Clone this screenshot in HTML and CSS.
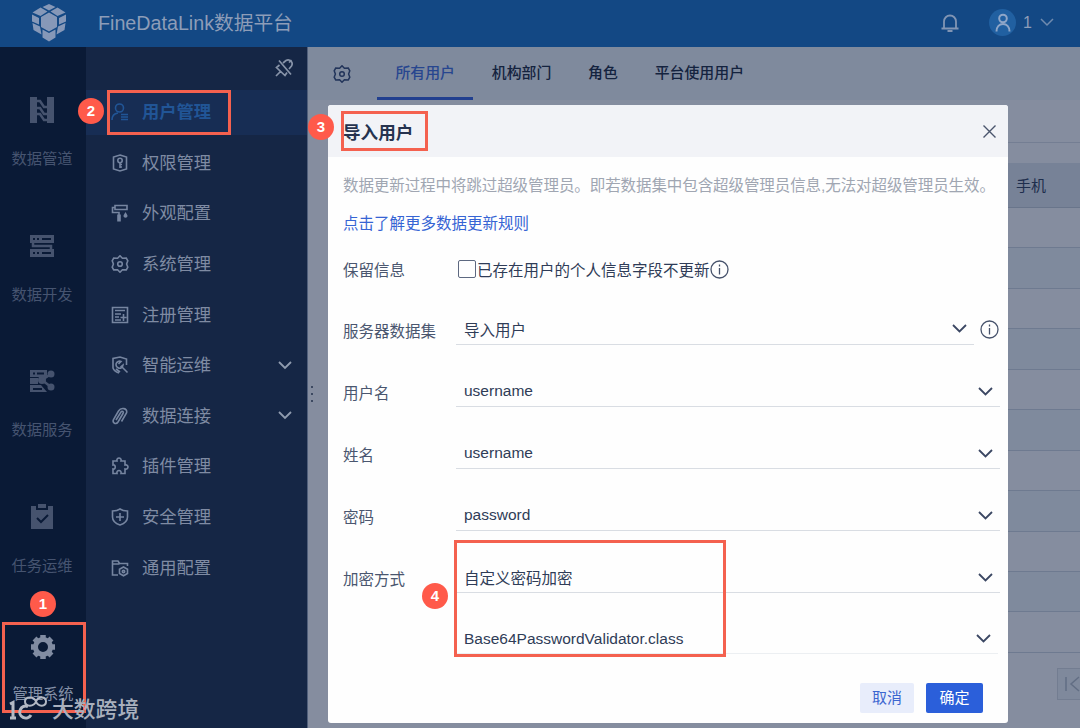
FILE: index.html
```html
<!DOCTYPE html>
<html lang="zh-CN">
<head>
	<meta charset="utf-8">
	<meta name="viewport" content="width=device-width, initial-scale=1">
	<title>FineDataLink数据平台</title>
	<link rel="stylesheet" href="styles.css">
</head>
<body>
	<div class="page">
		<div class="header">
			<svg class="logo" width="36" height="38" viewBox="0 0 36 38">
				<path d="M18 0l6.500 3-6.500 3.500-6.500-3.500z M9.500 3.500l7 4-7 4.500-8-3.500z M26.500 3.500l-7 4 7 4.500 8-3.500z M1 10.500l7 3.500v6.500l-7-3z M35 10.500l-7 3.500v6.500l7-3z M18 8.500l8 4.500v10l-8 4.500-8-4.500v-10z M1.500 19l7.500 3.500 1.500 8-8-4.500z M34.500 19l-7.500 3.500-1.500 8 8-4.500z M11.500 25.500l6.500 3.500 6.500-3.500v8l-6.500 4-6.500-4z"/>
			</svg>
			<div class="title">FineDataLink数据平台</div>
			<svg class="bell" width="20" height="20" viewBox="0 0 20 20"><path d="M4 15V8.500a6 6 0 0 1 12 0V15M1.500 15.500h17M7.500 18h5"/></svg>
			<div class="avatar">
				<svg width="20" height="22" viewBox="0 0 20 22"><circle cx="10" cy="6.500" r="3.800"/><path d="M3.500 19.500c0-5 3-7.500 6.500-7.500s6.500 2.500 6.500 7.500"/></svg>
			</div>
			<div class="user">1</div>
			<svg class="user-arrow" width="14" height="9" viewBox="0 0 14 9"><path d="M1 1l6 6 6-6"/></svg>
		</div>

		<div class="main">
			<div class="rail">
				<div class="rail-item">
					<svg width="26" height="26" viewBox="0 0 26 26"><path class="fill" d="M1 0h7v26H1zM18 0h7v26h-7z"/><path class="line" d="M8 4h3l4 6h3M8 11h3l4 6h3M8 17h3l4 6h3"/></svg>
					<span>数据管道</span>
				</div>
				<div class="rail-item">
					<svg width="26" height="26" viewBox="0 0 26 26"><path class="fill" fill-rule="evenodd" d="M1 2h24v8H1zM4 5v2h2V5zM8 5v2h2V5zM13 5v2h9V5zM1 16h24v8H1zM4 19v2h2v-2zM8 19v2h2v-2zM13 19v2h9v-2z"/><path class="line" d="M4 9v4h18v4"/></svg>
					<span>数据开发</span>
				</div>
				<div class="rail-item">
					<svg width="26" height="26" viewBox="0 0 26 26"><path class="fill" fill-rule="evenodd" d="M1 2h17v7H1zM4 4.500v2h2v-2zM8 4.500v2h7v-2zM1 10h8v6H1zM1 17h11l6 7H1zM4 20v2h9v-2z"/><circle class="fill" cx="13" cy="12" r="4"/><circle class="fill" cx="22" cy="6" r="3.500"/><circle class="fill" cx="22" cy="19" r="3.500"/><path class="line" d="M13 12l9-6M13 12l9 7"/></svg>
					<span>数据服务</span>
				</div>
				<div class="rail-item">
					<svg width="26" height="26" viewBox="0 0 26 26"><path class="fill" d="M2 2h5v4h12V2h5v23H2z"/><path class="fill" d="M9 0h8v4H9z"/><path class="check" d="M8 14l4 4 7-7"/></svg>
					<span>任务运维</span>
				</div>
				<div class="rail-item active">
					<svg width="26" height="26" viewBox="0 0 26 26"><circle class="ring" cx="13" cy="13" r="7.500"/><path class="teeth" d="M13 1v4M13 21v4M1 13h4M21 13h4M4.500 4.500l3 3M18.500 18.500l3 3M4.500 21.500l3-3M18.500 7.500l3-3"/></svg>
					<span>管理系统</span>
				</div>
			</div>

			<div class="menu">
				<div class="menu-top">
					<svg width="20" height="20" viewBox="0 0 20 20"><path d="M5 2.500l12 14M5.500 7L2.500 9.500l8.500 8 2-3M2 18l4.500-4.500M9 5l3-2.500a4 4 0 0 1 5.500 5.500L15 11M15 4.500l2.500-2.500"/></svg>
				</div>
				<div class="menu-item active">
					<svg width="18" height="18" viewBox="0 0 18 18"><circle cx="8.500" cy="5" r="4"/><path d="M1 17c0-4 2-6.500 6-7M10 11.500h7M10 14h7M10 16.500h7"/></svg>
					<span>用户管理</span>
				</div>
				<div class="menu-item">
					<svg width="18" height="18" viewBox="0 0 18 18"><path d="M9 1l6.500 2v12L9 17l-6.500-2V3z"/><circle cx="9" cy="6.500" r="2.200"/><path d="M9 8.500V14M9 10.500h2M9 13h2"/></svg>
					<span>权限管理</span>
				</div>
				<div class="menu-item">
					<svg width="18" height="18" viewBox="0 0 18 18"><path d="M4 1.500h12v4H4zM4 3.500H1.500v5H8V11"/><path class="solid" d="M6.200 10.500h3.600V17.500H6.200zM14.500 8l1.900 3.200a2 2 0 1 1-3.800 0z"/></svg>
					<span>外观配置</span>
				</div>
				<div class="menu-item">
					<svg width="18" height="18" viewBox="0 0 18 18"><path d="M9 .8l2.400 2.500 3.900-.2 1.500 2.700-1.200 3.200 1.200 3.200-1.500 2.700-3.900-.2L9 17.200l-2.400-2.500-3.900.2-1.500-2.700L2.400 9 1.200 5.800l1.500-2.700 3.900.2z"/><circle cx="9" cy="9" r="2.300"/></svg>
					<span>系统管理</span>
				</div>
				<div class="menu-item">
					<svg width="18" height="18" viewBox="0 0 18 18"><path d="M1.500 1.500h15v15h-15zM4 4.500h10M4 8h6M4 11h4M4 14h6M12.500 8v7M9.500 11.500h6"/></svg>
					<span>注册管理</span>
				</div>
				<div class="menu-item">
					<svg width="18" height="18" viewBox="0 0 18 18"><path d="M15.500 9V3L9 1 2 2.500V12c1 3 3 4 6 5M11 11l5.500 5.500M7.500 8L10 5.500A3.500 3.500 0 1 0 12 9L9.500 11M5 13l4 3"/></svg>
					<span>智能运维</span>
					<svg class="arrow" width="14" height="9" viewBox="0 0 14 9"><path d="M1 1l6 6 6-6"/></svg>
				</div>
				<div class="menu-item">
					<svg width="18" height="18" viewBox="0 0 18 18"><path d="M5 13l5-8c1-1.500 3-.5 2 1.500l-5 8.500c-2 3-6 1-4.500-2.500L7.500 4c2.500-4 9.500-3 8 2l-5 8.500"/></svg>
					<span>数据连接</span>
					<svg class="arrow" width="14" height="9" viewBox="0 0 14 9"><path d="M1 1l6 6 6-6"/></svg>
				</div>
				<div class="menu-item">
					<svg width="18" height="18" viewBox="0 0 18 18"><path d="M2 4h4c-1-4 5-4 4 0h4v4c4-1 4 5 0 4v4.500h-4c1-4-5-4-4 0H2V12c3 1 3-5 0-4z"/></svg>
					<span>插件管理</span>
				</div>
				<div class="menu-item">
					<svg width="18" height="18" viewBox="0 0 18 18"><path d="M9 1c2 1.500 5 2 7.500 2v6c0 4-3 6.500-7.500 8-4.500-1.500-7.500-4-7.500-8V3C4 3 7 2.500 9 1zM9 5v8M5 9h8"/></svg>
					<span>安全管理</span>
				</div>
				<div class="menu-item">
					<svg width="18" height="18" viewBox="0 0 18 18"><path d="M7 16H1.500V2H7l1.500 2.500h8V7M1.500 5h7M12.500 8l4 2.200v4.300l-4 2.300-4-2.300v-4.300z"/><circle cx="12.500" cy="12.400" r="1.200"/></svg>
					<span>通用配置</span>
				</div>
			</div>

			<div class="content">
				<div class="tabs">
					<svg width="18" height="18" viewBox="0 0 18 18"><path d="M9 .8l2.400 2.500 3.900-.2 1.500 2.700-1.200 3.200 1.200 3.200-1.500 2.700-3.900-.2L9 17.200l-2.400-2.500-3.900.2-1.500-2.700L2.400 9 1.200 5.800l1.500-2.700 3.900.2z"/><circle cx="9" cy="9" r="2.300"/></svg>
					<div class="tab selected">所有用户</div>
					<div class="tab">机构部门</div>
					<div class="tab">角色</div>
					<div class="tab">平台使用用户</div>
				</div>
				<div class="table">
					<div class="tools"></div>
					<div class="th">手机</div>
					<div class="tr"></div>
					<div class="tr"></div>
					<div class="tr"></div>
					<div class="tr"></div>
					<div class="tr"></div>
					<div class="tr"></div>
					<div class="tr"></div>
					<div class="tr"></div>
					<div class="tr"></div>
					<div class="tr"></div>
					<div class="tr"></div>
					<div class="pager">
						<svg width="22" height="30" viewBox="0 0 22 30"><path d="M8 8v14M21 8l-8 7 8 7"/></svg>
					</div>
				</div>
			</div>
		</div>

		<div class="handle"><i></i><i></i><i></i></div>

		<!-- import dialog -->
		<div class="dialog">
			<div class="dialog-head">
				<span>导入用户</span>
				<svg width="13" height="13" viewBox="0 0 13 13"><path d="M.5.5l12 12M12.500.5l-12 12"/></svg>
			</div>
			<div class="dialog-body">
				<div class="tip">数据更新过程中将跳过超级管理员。即若数据集中包含超级管理员信息,无法对超级管理员生效。</div>
				<div class="link">点击了解更多数据更新规则</div>
				<div class="row check-row">
					<div class="label">保留信息</div>
					<div class="checkbox"></div>
					<div class="check-text">已存在用户的个人信息字段不更新</div>
					<svg class="info" width="19" height="19" viewBox="0 0 19 19"><circle cx="9.500" cy="9.500" r="8.500"/><path d="M9.500 8v6.500M9.500 4.500v2"/></svg>
				</div>
				<div class="row">
					<div class="label">服务器数据集</div>
					<div class="select short"><span>导入用户</span><svg width="15" height="9" viewBox="0 0 15 9"><path d="M1 1l6.500 6.500L14 1"/></svg></div>
					<svg class="info" width="19" height="19" viewBox="0 0 19 19"><circle cx="9.500" cy="9.500" r="8.500"/><path d="M9.500 8v6.500M9.500 4.500v2"/></svg>
				</div>
				<div class="row">
					<div class="label">用户名</div>
					<div class="select"><span>username</span><svg width="15" height="9" viewBox="0 0 15 9"><path d="M1 1l6.500 6.500L14 1"/></svg></div>
				</div>
				<div class="row">
					<div class="label">姓名</div>
					<div class="select"><span>username</span><svg width="15" height="9" viewBox="0 0 15 9"><path d="M1 1l6.500 6.500L14 1"/></svg></div>
				</div>
				<div class="row">
					<div class="label">密码</div>
					<div class="select"><span>password</span><svg width="15" height="9" viewBox="0 0 15 9"><path d="M1 1l6.500 6.500L14 1"/></svg></div>
				</div>
				<div class="row">
					<div class="label">加密方式</div>
					<div class="select"><span>自定义密码加密</span><svg width="15" height="9" viewBox="0 0 15 9"><path d="M1 1l6.500 6.500L14 1"/></svg></div>
				</div>
				<div class="row">
					<div class="label"></div>
					<div class="select last"><span>Base64PasswordValidator.class</span><svg width="15" height="9" viewBox="0 0 15 9"><path d="M1 1l6.500 6.500L14 1"/></svg></div>
				</div>
			</div>
			<div class="dialog-foot">
				<div class="btn cancel">取消</div>
				<div class="btn ok">确定</div>
			</div>
		</div>

		<!-- step marks -->
		<div class="mark mark1"></div>
		<div class="mark mark2"></div>
		<div class="mark mark3"></div>
		<div class="mark mark4"></div>
		<div class="num num1">1</div>
		<div class="num num2">2</div>
		<div class="num num3">3</div>
		<div class="num num4">4</div>

		<div class="watermark">
			<svg width="39" height="26" viewBox="0 0 39 26"><path d="M1 9l3-1.500V23M1 23h6M22 20a6 6 0 1 1-3-8.500"/><path class="thin" d="M27 6.500C25 1 16 1 16 6.500s9 5.500 11 0 10-5.500 10 0-8 5.500-10 0z"/></svg>
			<span>大数跨境</span>
		</div>
	</div>
</body>
</html>
```
FILE: styles.css
```css
body{
	margin: 0;
	font-family: "Liberation Sans", "Noto Sans CJK SC", sans-serif;
	font-size: 15.5px;
	color: #35425c;
}
svg{
	display: block;
	flex-shrink: 0;
	fill: none;
	stroke-width: 1.5;
}
.page{
	position: relative;
	width: 1080px;
	height: 728px;
	overflow: hidden;
	display: flex;
	flex-direction: column;
	white-space: nowrap;
}
.header{
	height: 47px;
	flex-shrink: 0;
	background-color: #134884;
	display: flex;
	align-items: center;
	box-sizing: border-box;
	padding: 0 26px 2px 31px;
	color: #8d9db8;
}
.logo{
	fill: #8698b8;
	margin-top: 1px;
}
.title{
	margin-left: 31px;
	font-size: 19.7px;
	line-height: 28px;
}
.bell{
	margin-left: auto;
	stroke: #8195b4;
	stroke-width: 1.8;
}
.avatar{
	width: 27px;
	height: 27px;
	border-radius: 50%;
	background-color: #2160a1;
	margin-left: 29px;
	display: flex;
	align-items: center;
	justify-content: center;
}
.avatar svg{
	stroke: #8fa6c8;
	stroke-width: 2;
}
.user{
	font-size: 16px;
	margin-left: 7px;
	width: 17px;
}
.user-arrow{
	stroke: #708baf;
}
.main{
	flex: 1;
	display: flex;
	min-height: 0;
}
.rail{
	width: 86px;
	flex-shrink: 0;
	box-sizing: border-box;
	padding-top: 50px;
	background-color: #0a1a36;
	display: flex;
	flex-direction: column;
	gap: 63.6px;
}
.rail-item{
	height: 72px;
	flex-shrink: 0;
	display: flex;
	flex-direction: column;
	align-items: center;
	justify-content: space-between;
	font-size: 15.3px;
	line-height: 20px;
	color: #465470;
	padding-right: 2px;
}
.rail-item .fill{
	fill: #46536e;
}
.rail-item .line{
	stroke: #46536e;
	stroke-width: 2.5;
}
.rail-item .check{
	stroke: #0a1a36;
	stroke-width: 2;
}
.rail-item.active{
	margin-top: -5px;
	height: 70px;
	color: #8490a7;
	padding-right: 0;
}
.rail-item .ring{
	stroke: #818ca2;
	stroke-width: 5;
}
.rail-item .teeth{
	stroke: #818ca2;
	stroke-width: 5.5;
}
.menu{
	width: 221px;
	flex-shrink: 0;
	background-color: #152645;
	border-right: 1px solid #505f7b;
}
.menu-top{
	height: 42.5px;
	display: flex;
	align-items: center;
	justify-content: flex-end;
	padding-right: 13px;
}
.menu-top svg{
	stroke: #8793a8;
	stroke-width: 1.7;
}
.menu-item{
	height: 45px;
	margin-bottom: 5.63px;
	display: flex;
	align-items: center;
	padding: 0 15px 0 25px;
	font-size: 17.3px;
	line-height: 24px;
	color: #7f8ba3;
}
.menu-item svg{
	stroke: #7685a0;
	stroke-width: 1.6;
}
.menu-item .solid{
	fill: #7685a0;
	stroke: none;
}
.menu-item span{
	margin-left: 13px;
}
.menu-item .arrow{
	margin-left: auto;
	stroke: #909caf;
	stroke-width: 1.8;
}
.menu-item.active{
	background-color: #172d54;
	color: #215596;
	font-weight: bold;
}
.menu-item.active svg{
	stroke: #215596;
}
.content{
	flex: 1;
	background-color: #858d9f;
}
.tabs{
	height: 53px;
	display: flex;
	align-items: center;
	background-color: #7f8a9d;
	padding-left: 25px;
}
.tabs svg{
	stroke: #22345a;
	stroke-width: 1.5;
	margin-right: 26px;
}
.tab{
	height: 53px;
	box-sizing: border-box;
	padding: 0 18.4px;
	font-size: 14.9px;
	line-height: 52px;
	font-weight: 500;
	color: #14233f;
}
.tab.selected{
	color: #27468f;
	border-bottom: 3px solid #213f8f;
}
.table{
	margin-left: 30px;
}
.tools{
	height: 42px;
	border-bottom: 1px solid #747e93;
	margin-bottom: 20px;
}
.th{
	height: 44px;
	border-bottom: 1px solid #69758b;
	background-color: #778297;
	font-size: 15px;
	line-height: 46px;
	padding-left: 678px;
	color: #1e2e4d;
}
.tr{
	height: 39.45px;
	border-bottom: 1px solid #6e7a90;
}
.tr:nth-child(even){
	background-color: #7f8a9d;
}
.pager{
	width: 23px;
	height: 30px;
	margin: 15px 0 0 719px;
	border: 1px solid #737d91;
	background-color: #7f899c;
}
.pager svg{
	stroke: #626e84;
}
.handle{
	position: absolute;
	left: 311px;
	top: 386px;
	display: flex;
	flex-direction: column;
	gap: 5px;
}
.handle i{
	width: 2px;
	height: 2px;
	background-color: #3c4961;
}
.dialog{
	position: absolute;
	left: 328px;
	top: 105px;
	width: 680px;
	height: 618px;
	background-color: #fefefe;
	border-radius: 3px;
	overflow: hidden;
	display: flex;
	flex-direction: column;
}
.dialog-head{
	height: 52px;
	background-color: #f2f3f7;
	display: flex;
	align-items: center;
	justify-content: space-between;
	padding: 0 12px 0 15px;
	font-size: 17.6px;
	font-weight: bold;
	color: #26334f;
}
.dialog-head svg{
	stroke: #4a556c;
	stroke-width: 1.4;
}
.dialog-body{
	padding-left: 15px;
	flex: 1;
}
.tip{
	margin-top: 17px;
	line-height: 24px;
	letter-spacing: -.08px;
	color: #a0a6b2;
}
.link{
	margin-top: 14px;
	line-height: 24px;
	color: #3664d4;
}
.row{
	height: 61.9px;
	display: flex;
	align-items: flex-start;
}
.label{
	width: 113px;
	line-height: 24px;
	padding-top: 16px;
	color: #4a566f;
}
.check-row{
	height: 51px;
	align-items: center;
	box-sizing: border-box;
	padding-bottom: 19px;
	margin-top: 17px;
}
.check-row .label{
	padding-top: 3px;
}
.checkbox{
	width: 16px;
	height: 16px;
	border: 1px solid #5d6880;
	border-radius: 2px;
	margin-left: 2px;
}
.check-text{
	margin-left: 1px;
	color: #2f3c57;
}
.info{
	stroke: #46526b;
	stroke-width: 1.3;
}
.row > .info{
	margin-top: 16px;
	margin-left: 6px;
}
.check-row > .info{
	margin-top: 0;
	margin-left: 0;
}
.select{
	width: 544px;
	height: 41px;
	box-sizing: border-box;
	padding: 11px 7px 0 8px;
	border-bottom: 1px solid #d9dde3;
	display: flex;
	align-items: center;
	justify-content: space-between;
	color: #2f3c57;
}
.select svg{
	stroke: #3b4763;
	stroke-width: 1.8;
}
.select.short{
	width: 518px;
	padding-top: 9px;
}
.select.last{
	width: 542px;
	border-color: #eceff2;
}
.dialog-foot{
	display: flex;
	justify-content: flex-end;
	gap: 12px;
	padding: 0 25px 10px 0;
}
.btn{
	height: 30px;
	border-radius: 2px;
	font-size: 15px;
	line-height: 30px;
	text-align: center;
}
.cancel{
	width: 54px;
	background-color: #e8edfb;
	color: #3c66d0;
}
.ok{
	width: 57px;
	background-color: #2b5fda;
	color: white;
}
.mark{
	position: absolute;
	box-sizing: border-box;
	border: 3px solid #f4614f;
}
.mark1{
	left: 2px;
	top: 622px;
	width: 84px;
	height: 91px;
}
.mark2{
	left: 107px;
	top: 90px;
	width: 124px;
	height: 45px;
}
.mark3{
	left: 341px;
	top: 111px;
	width: 87px;
	height: 40px;
}
.mark4{
	left: 454px;
	top: 540px;
	width: 272px;
	height: 117px;
}
.num{
	position: absolute;
	width: 26px;
	height: 26px;
	border-radius: 50%;
	background-color: #ff5a4a;
	color: white;
	font-size: 15px;
	font-weight: bold;
	line-height: 26px;
	text-align: center;
}
.num1{
	left: 30px;
	top: 591px;
}
.num2{
	left: 78px;
	top: 98px;
}
.num3{
	left: 308px;
	top: 114px;
}
.num4{
	left: 422px;
	top: 583px;
}
.watermark{
	position: absolute;
	left: 9px;
	top: 695px;
	display: flex;
	align-items: center;
	gap: 4px;
	font-size: 21.8px;
	font-weight: 500;
	line-height: 30px;
	color: #a9b0bd;
}
.watermark svg{
	stroke: #b3b9c4;
	stroke-width: 3;
	margin-top: -4px;
}
.watermark .thin{
	stroke-width: 2;
}
```
